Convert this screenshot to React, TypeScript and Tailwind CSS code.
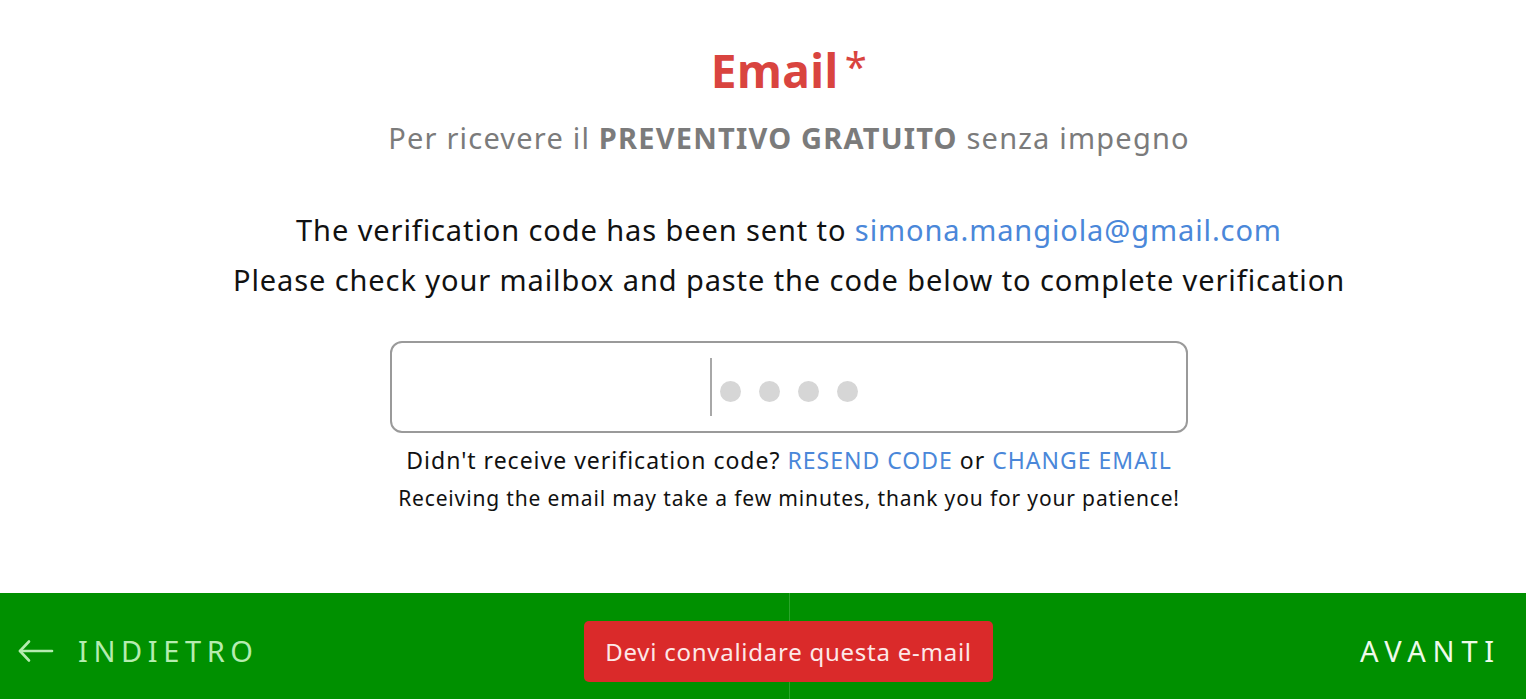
import React from 'react';

// Email verification step of the quote wizard

const font = { fontFamily: '"Noto Sans", "Lato", sans-serif' };

function CodeInput() {
  return (
    <div className="w-[798px] h-[92px] rounded-[12px] border-2 border-[#9a9a9a] flex items-center justify-center">
      <div className="flex items-center mr-[10px]">
        <div className="w-[2px] h-[58px] bg-[#a8a8a8] mr-[8px]" />
        <div className="flex gap-[18px] mt-[8px]">
          {[0, 1, 2, 3].map((i) => (
            <span key={i} className="w-[21px] h-[21px] rounded-full bg-[#d6d6d6]" />
          ))}
        </div>
      </div>
    </div>
  );
}

function Footer() {
  return (
    <div className="relative h-[106px] bg-[#009000] flex">
      <div className="w-[790px] border-r border-[#2aa52a] flex items-center pl-[18px] pt-[9px]">
        <button className="flex items-center gap-[24px] text-[#b5ecb0]">
          <svg width="36" height="26" viewBox="0 0 36 26" fill="none" stroke="currentColor" strokeWidth="2.6" strokeLinecap="round" strokeLinejoin="round">
            <path d="M34 13H2" />
            <path d="M11 3.5L2 13l9 9.5" />
          </svg>
          <span className="text-[29px] tracking-[5.6px] leading-none">INDIETRO</span>
        </button>
      </div>
      <div className="flex-1 flex items-center justify-end pr-[25px] pt-[9px]">
        <span className="text-[29px] tracking-[6.8px] leading-none text-[#eefaea]">AVANTI</span>
      </div>
      <div className="absolute left-[584px] top-[28px] w-[409px] h-[61px] rounded-[5px] bg-[#da2a2a] flex items-center justify-center">
        <span className="text-[24px] tracking-[0.75px] text-[#fde8e8]">Devi convalidare questa e-mail</span>
      </div>
    </div>
  );
}

export default function App() {
  return (
    <div className="w-[1526px] h-[699px] bg-white flex flex-col overflow-hidden" style={font}>
      <div className="flex-1 pl-[52px] flex flex-col items-center">
        <h1 className="mt-[42px] text-[46px] tracking-[0.5px] leading-[56px] font-bold text-[#d9443f] flex items-start">
          Email<span className="font-normal text-[40px] leading-[40px] ml-[6px] mt-[4px]">*</span>
        </h1>
        <p className="mt-[20px] text-[29px] tracking-[1.2px] leading-[40px] text-[#7b7b7b]">
          Per ricevere il <span className="font-bold">PREVENTIVO GRATUITO</span> senza impegno
        </p>
        <p className="mt-[47px] text-[29px] tracking-[0.9px] leading-[50px] text-[#111]">
          The verification code has been sent to <span className="text-[#4a87d9]">simona.mangiola@gmail.com</span>
        </p>
        <p className="text-[29px] tracking-[0.9px] leading-[50px] text-[#111]">
          Please check your mailbox and paste the code below to complete verification
        </p>
        <div className="mt-[36px]">
          <CodeInput />
        </div>
        <p className="mt-[12px] text-[23px] tracking-[1px] leading-[30px] text-[#111]">
          Didn't receive verification code? <span className="text-[#4a87d9]">RESEND CODE</span> or{' '}
          <span className="text-[#4a87d9]">CHANGE EMAIL</span>
        </p>
        <p className="mt-[8px] text-[21px] tracking-[0.85px] leading-[30px] text-[#111]">
          Receiving the email may take a few minutes, thank you for your patience!
        </p>
      </div>
      <Footer />
    </div>
  );
}
